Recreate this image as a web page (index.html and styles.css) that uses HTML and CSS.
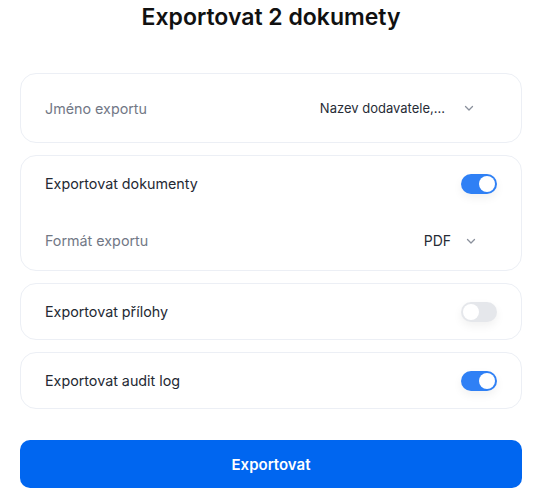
FILE: index.html
```html
<!DOCTYPE html>
<html lang="cs">
<head>
  <meta charset="UTF-8">
  <meta name="viewport" content="width=device-width, initial-scale=1.0">
  <title>Exportovat</title>
  <link rel="stylesheet" href="styles.css">
</head>
<body>
  <div id="dialog">
    <h1 class="title">Exportovat 2 dokumety</h1>
    <div class="card">
      <div class="row tall">
        <span class="label muted">Jméno exportu</span>
        <div class="select wide">
          <span>Nazev dodavatele,...</span>
          <svg class="chev" width="12" height="12" viewBox="0 0 12 12"><path d="M2.5 4.5 6 8l3.5-3.5" /></svg>
        </div>
      </div>
    </div>
    <div class="card">
      <div class="row first">
        <span class="label">Exportovat dokumenty</span>
        <div class="toggle on"><i></i></div>
      </div>
      <div class="row second">
        <span class="label muted">Formát exportu</span>
        <div class="select">
          <span>PDF</span>
          <svg class="chev" width="12" height="12" viewBox="0 0 12 12"><path d="M2.5 4.5 6 8l3.5-3.5" /></svg>
        </div>
      </div>
    </div>
    <div class="card">
      <div class="row">
        <span class="label">Exportovat přílohy</span>
        <div class="toggle"><i></i></div>
      </div>
    </div>
    <div class="card">
      <div class="row">
        <span class="label">Exportovat audit log</span>
        <div class="toggle on"><i></i></div>
      </div>
    </div>
    <button class="btn">Exportovat</button>
  </div>
</body>
</html>
```

FILE: styles.css
```css
* {
  margin: 0;
  padding: 0;
  box-sizing: border-box;
}
body {
  font-family: Inter, "Noto Sans", sans-serif;
  background: #fff;
  color: #1f2430;
}
#dialog {
  width: 502px;
  margin-left: 20px;
  padding-top: 5px;
  display: flex;
  flex-direction: column;
  gap: 12px;
}
.title {
  font-size: 23px;
  font-weight: 600;
  color: #111;
  text-align: center;
  line-height: 24px;
  margin-bottom: 32px;
}
.card {
  border: 1px solid #eceff5;
  border-radius: 16px;
  padding: 0 24px;
}
.row {
  display: flex;
  align-items: center;
  justify-content: space-between;
  height: 55px;
}
.row.tall {
  height: 68px;
}
.row.first {
  height: 55px;
}
.row.second {
  height: 59px;
}
.label {
  font-size: 14.3px;
  color: #242933;
}
.label.muted {
  color: #727886;
}
.select {
  display: flex;
  align-items: center;
  gap: 14px;
  padding-right: 20px;
  font-size: 14px;
  color: #272c36;
}
.select.wide {
  gap: 18px;
  padding-right: 22px;
  font-size: 13px;
}
.chev {
  fill: none;
  stroke: #8a909c;
  stroke-width: 1.3;
  stroke-linecap: round;
  stroke-linejoin: round;
}
.toggle {
  width: 36px;
  height: 20px;
  border-radius: 10px;
  background: #e5e7eb;
  padding: 2px;
  display: flex;
  box-shadow: 0 4px 10px rgba(0, 0, 0, 0.06);
}
.toggle i {
  width: 16px;
  height: 16px;
  border-radius: 50%;
  background: #fff;
}
.toggle.on {
  background: #2f80f5;
  justify-content: flex-end;
}
.btn {
  margin-top: 19px;
  height: 48px;
  border: none;
  border-radius: 10px;
  background: #0066f0;
  color: #fff;
  font-family: Inter, sans-serif;
  font-size: 15px;
  font-weight: 600;
}
```
